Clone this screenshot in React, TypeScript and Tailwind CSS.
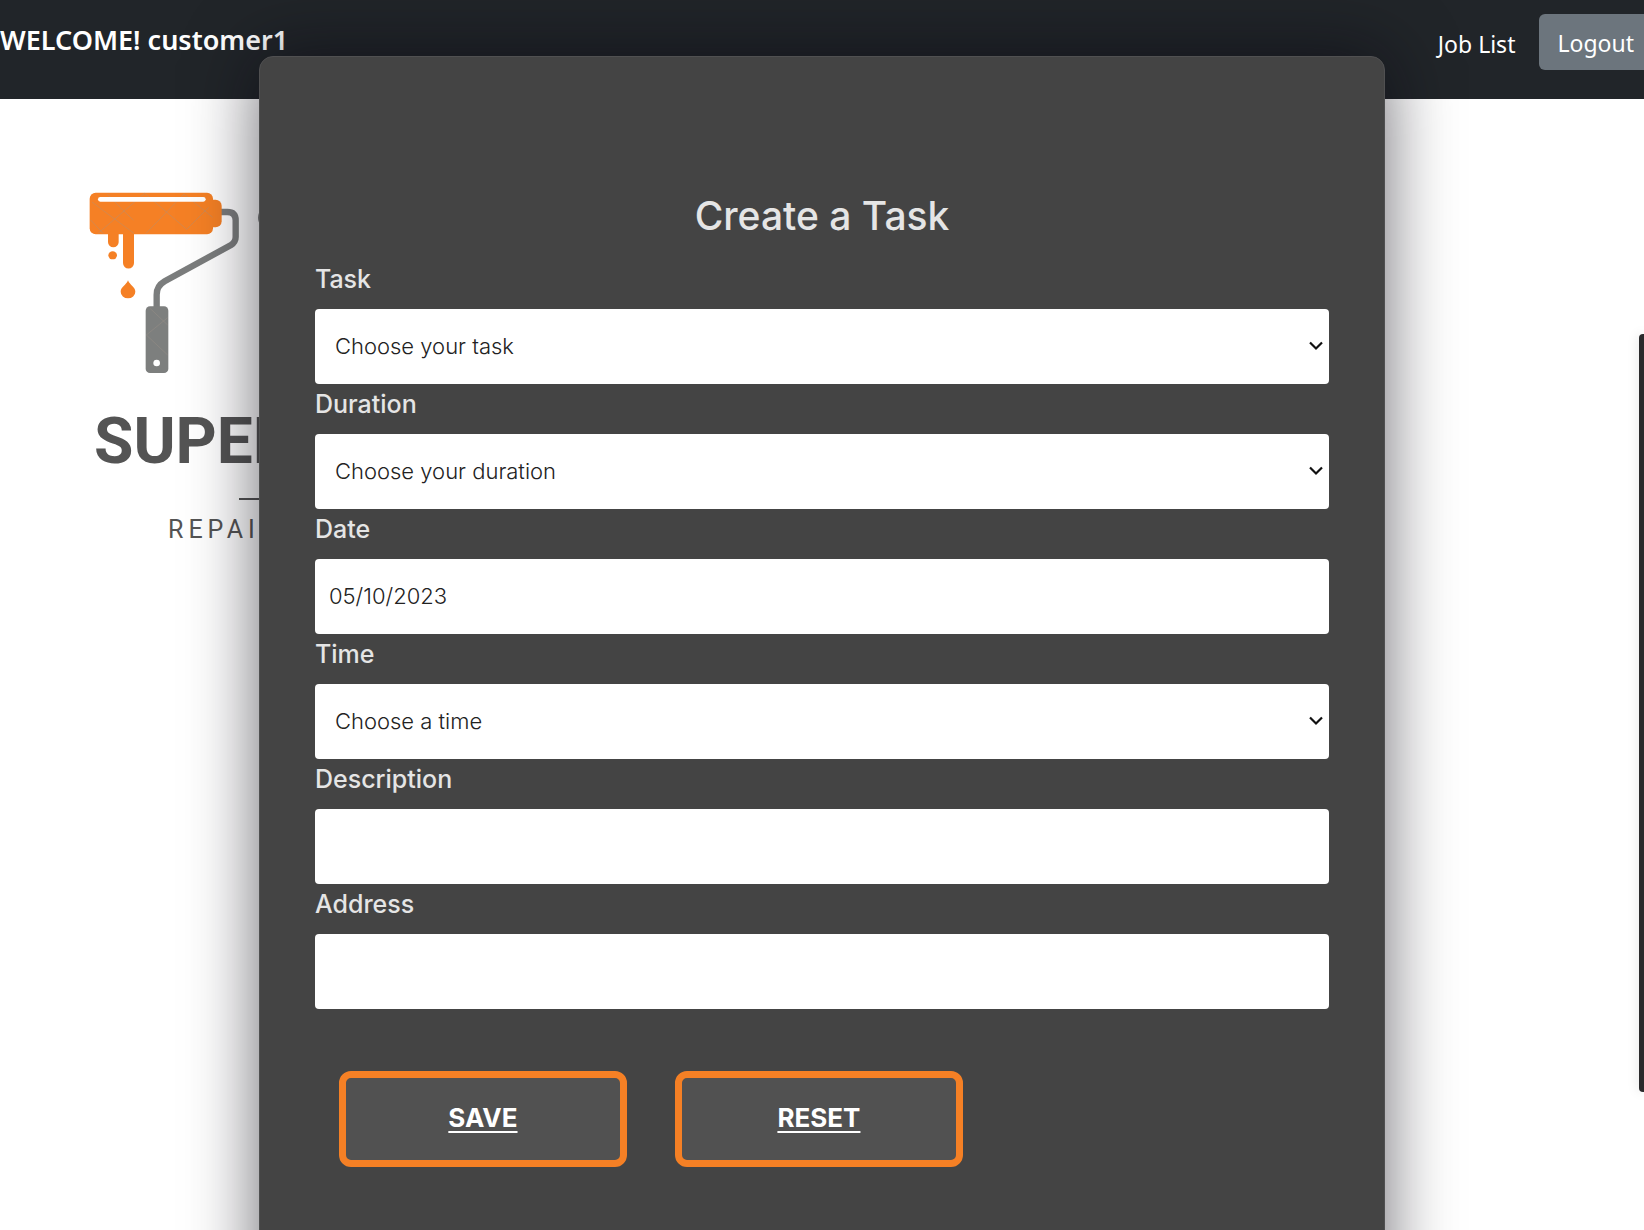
import React from "react";

const labelClass = "flex h-[50px] items-center pb-2 text-[25px] font-medium text-[#e5e5e5]";
const controlClass =
  "block h-[75px] w-full appearance-none rounded-sm bg-white text-[22px] font-light text-[#222222] outline-none";

function SelectField({ id, label, placeholder }: { id: string; label: string; placeholder: string }) {
  return (
    <div>
      <label htmlFor={id} className={labelClass}>
        {label}
      </label>
      <div className="relative">
        <select id={id} className={`${controlClass} pr-10 pl-5`} defaultValue="">
          <option value="">{placeholder}</option>
        </select>
        <svg
          aria-hidden="true"
          viewBox="0 0 14 10"
          className="pointer-events-none absolute top-8 right-1.5 h-2.5 w-3.5"
          fill="none"
          stroke="#111111"
          strokeWidth="2.2"
        >
          <path d="M1 1.5l6 6 6-6" />
        </svg>
      </div>
    </div>
  );
}

function TextField({ id, label, value = "" }: { id: string; label: string; value?: string }) {
  return (
    <div>
      <label htmlFor={id} className={labelClass}>
        {label}
      </label>
      <input id={id} type="text" defaultValue={value} className={`${controlClass} px-3.5 pb-0.5`} />
    </div>
  );
}

function RollerLogo() {
  return (
    <svg viewBox="0 0 660 660" className="h-[220px] w-[220px]" aria-hidden="true">
      <path
        d="M450 126h22q25 0 25 25v50q0 15-14 24L284 334q-24 14-24 40v44"
        fill="none"
        stroke="#7b7d7d"
        strokeWidth="19"
      />
      <g fill="#f58025">
        <rect x="400" y="89" width="55" height="83" rx="18" />
        <rect x="59" y="68" width="370" height="125" rx="18" />
        <path d="M114 185h32v31a16 16 0 0 1-32 0z" />
        <path d="M159 185h33v94a16.500 16.500 0 0 1-33 0z" />
        <ellipse cx="128" cy="256" rx="13" ry="12" />
        <path d="M174 331c5 14 22 20 22 34a22 20 0 0 1-44 0c0-14 17-20 22-34z" />
      </g>
      <rect x="227" y="409" width="68" height="200" rx="13" fill="#7d7f7e" />
      <circle cx="260" cy="579" r="10" fill="#ffffff" />
      <g fill="none" stroke="#a09488" strokeWidth="2.500" opacity="0.45">
        <path d="M62 150L100 191M84 190L224 70L350 178L416 112M66 96L100 122L192 190M160 122L112 72M160 122L190 150M228 190L342 72L428 142" />
        <path d="M229 495L293 443M229 495L293 555M240 415L293 465" />
      </g>
      <rect x="84" y="81" width="323" height="14" rx="7" fill="#ffffff" />
      <circle cx="600" cy="143" r="31" fill="none" stroke="#7b7d7d" strokeWidth="10" />
    </svg>
  );
}

export default function App() {
  return (
    <div className="relative h-screen overflow-hidden bg-white font-['Inter',sans-serif]">
      <header className="-mx-2 flex h-[99px] items-start justify-between bg-[#212529] font-['Noto_Sans',sans-serif] text-white">
        <h1 className="pt-5 pl-2 text-[27px] leading-10 font-semibold whitespace-nowrap">WELCOME! customer1</h1>
        <nav className="flex gap-6 pt-3.5">
          <a href="#jobs" className="py-3 text-[23px] leading-9 whitespace-nowrap">
            Job List
          </a>
          <button type="button" className="h-14 rounded-md bg-[#6c757d] px-[18px] pt-0.5 text-[23px]">
            Logout
          </button>
        </nav>
      </header>

      <main className="flex flex-col pt-[71px] pl-[70px]">
        <RollerLogo />
        <div className="flex w-[330px] flex-col pl-6">
          <p className="pt-4 font-['Roboto',sans-serif] text-[64px] leading-[72px] font-bold text-[#545454]">SUPER</p>
          <div className="mt-5 ml-[145px] h-0.5 bg-[#545454]" />
          <p className="pt-2.5 pl-[74px] font-['Roboto',sans-serif] text-[25px] leading-10 tracking-[0.2em] text-[#545454]">
            REPAIR
          </p>
        </div>
      </main>

      <div className="absolute top-[334px] right-0 h-[758px] w-[5px] rounded-l-sm bg-[#2a2a2c] shadow-[0_0_12px_rgba(0,0,0,0.15)]" />

      <div className="absolute inset-x-0 top-14 flex justify-center">
        <form className="h-[1300px] w-[68.5%] rounded-[14px] border border-[#505051] bg-[#444444] px-[55px] pt-[134px] shadow-[0_0_70px_rgba(8,7,16,0.6)]">
          <h2 className="text-center text-[39px] leading-[50px] font-medium text-[#e5e5e5]">Create a Task</h2>
          <div className="pt-[18px]">
            <SelectField id="task" label="Task" placeholder="Choose your task" />
            <SelectField id="duration" label="Duration" placeholder="Choose your duration" />
            <TextField id="date" label="Date" value="05/10/2023" />
            <SelectField id="time" label="Time" placeholder="Choose a time" />
            <TextField id="description" label="Description" />
            <TextField id="address" label="Address" />
          </div>
          <div className="flex gap-12 px-6 pt-[62px]">
            <button
              type="button"
              className="h-24 w-72 rounded-xl border-[7px] border-[#f58025] bg-[#515151] pb-1 text-[26px] font-bold text-white underline underline-offset-4"
            >
              SAVE
            </button>
            <button
              type="reset"
              className="h-24 w-72 rounded-xl border-[7px] border-[#f58025] bg-[#515151] pb-1 text-[26px] font-bold text-white underline underline-offset-4"
            >
              RESET
            </button>
          </div>
        </form>
      </div>
    </div>
  );
}
